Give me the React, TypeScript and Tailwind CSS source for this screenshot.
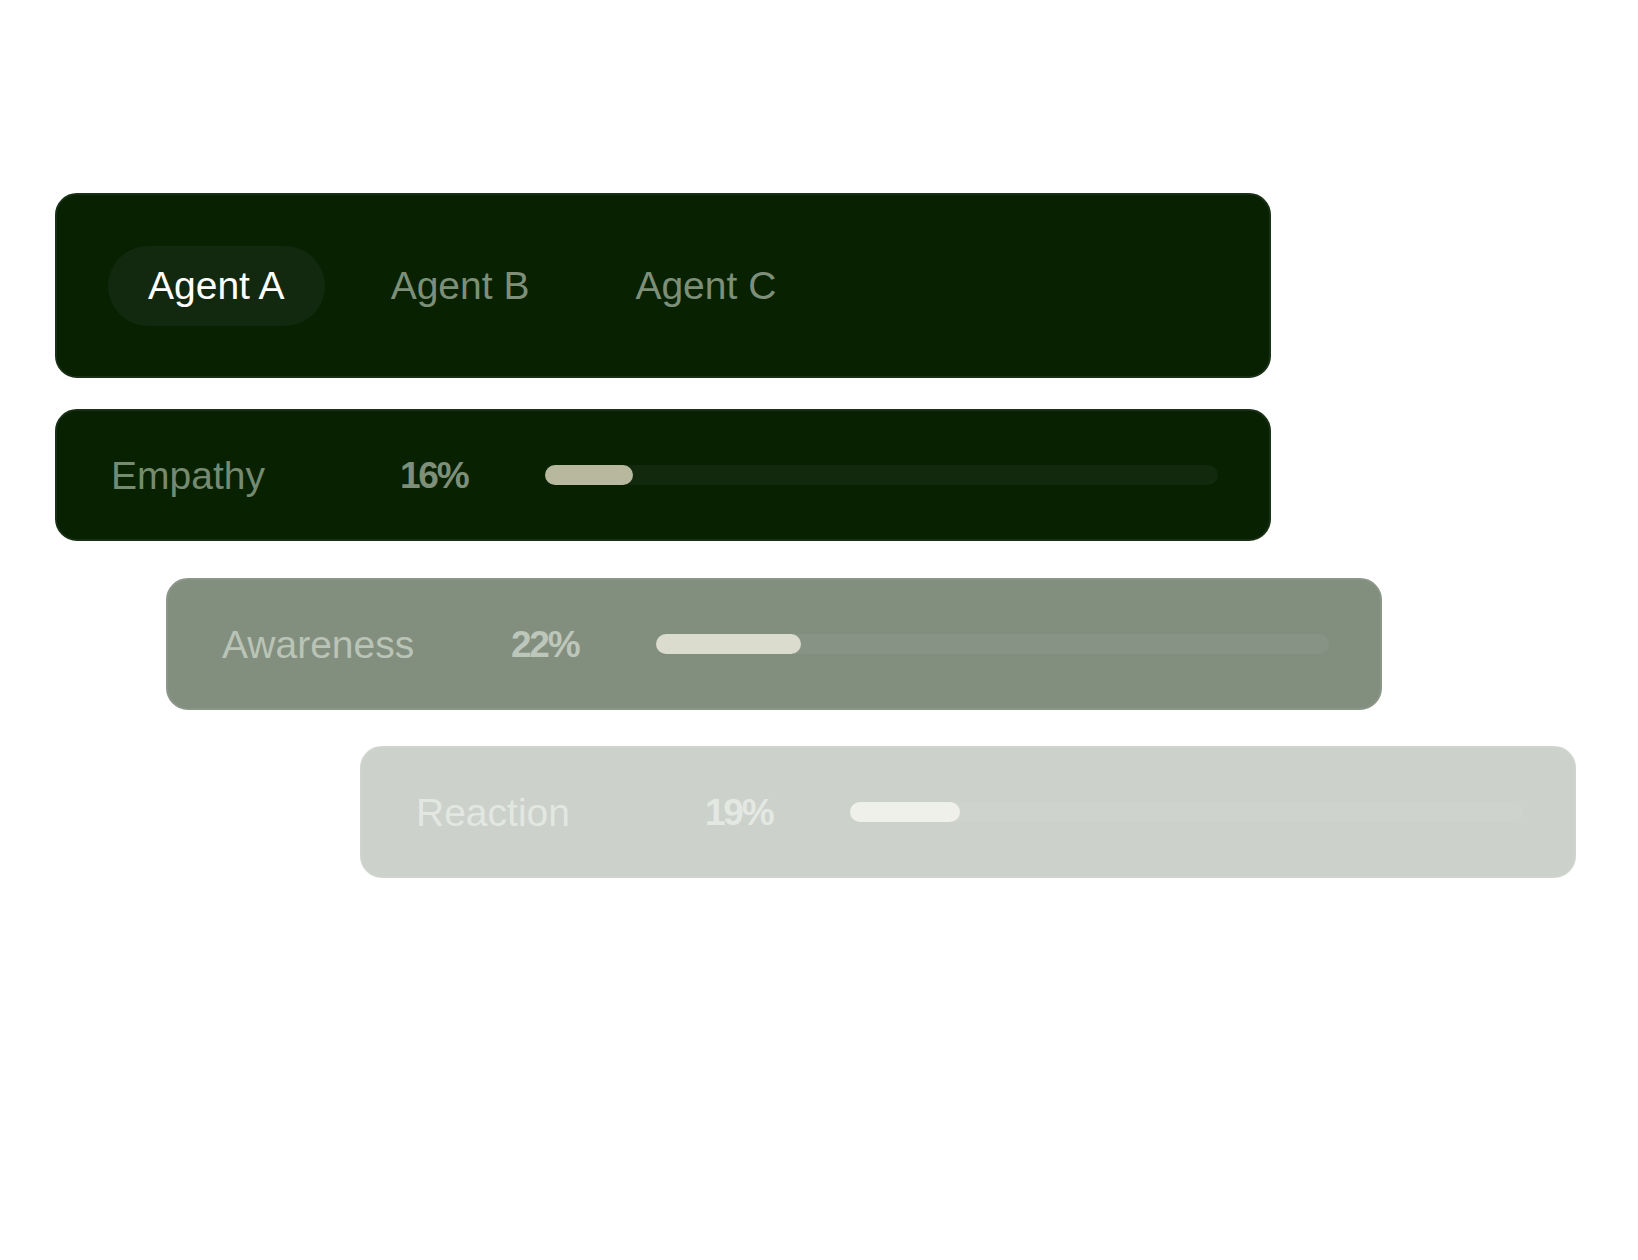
import React from "react";

type Metric = { label: string; pct: string; fill: number; ml: string; mt: string; opacity: string };

const metrics: Metric[] = [
  { label: "Empathy", pct: "16%", fill: 88, ml: "ml-[55px]", mt: "mt-[31px]", opacity: "opacity-100" },
  { label: "Awareness", pct: "22%", fill: 145, ml: "ml-[166px]", mt: "mt-[37px]", opacity: "opacity-50" },
  { label: "Reaction", pct: "19%", fill: 110, ml: "ml-[360px]", mt: "mt-[36px]", opacity: "opacity-20" },
];

function MetricCard({ m }: { m: Metric }) {
  return (
    <div
      className={`${m.ml} ${m.mt} ${m.opacity} box-border flex h-[132px] w-[1216px] items-center rounded-[22px] border-2 border-[#1a3016] bg-[#082101] pl-[54px] pr-[51px]`}
    >
      <div className="w-[289px] shrink-0 text-[39px] leading-none text-[#768a70]">
        {m.label}
      </div>
      <div className="w-[145px] shrink-0 text-[37px] font-bold leading-none tracking-[-0.06em] text-[#7e8f79]">
        {m.pct}
      </div>
      <div className="h-[20px] flex-1 rounded-full bg-[#12290e]">
        <div className="h-full rounded-full bg-[#b8b89f]" style={{ width: `${m.fill}px` }} />
      </div>
    </div>
  );
}

export default function App() {
  return (
    <div
      className="min-h-[1260px] w-full bg-white pt-[193px]"
      style={{ fontFamily: '"Liberation Sans", Arial, sans-serif' }}
    >
      <div className="flex flex-col items-start">
        <div className="ml-[55px] box-border flex h-[185px] w-[1216px] items-center gap-[26px] rounded-[22px] border-2 border-[#1a3016] bg-[#082101] px-[51px]">
          <div className="flex h-[80px] items-center rounded-full bg-[#13290f] px-[40px] text-[39px] leading-none text-white">
            Agent A
          </div>
          <div className="flex h-[80px] items-center rounded-full px-[40px] text-[39px] leading-none text-[#7d8f78]">
            Agent B
          </div>
          <div className="flex h-[80px] items-center rounded-full px-[40px] text-[39px] leading-none text-[#7d8f78]">
            Agent C
          </div>
        </div>
        {metrics.map((m) => (
          <MetricCard key={m.label} m={m} />
        ))}
      </div>
    </div>
  );
}
